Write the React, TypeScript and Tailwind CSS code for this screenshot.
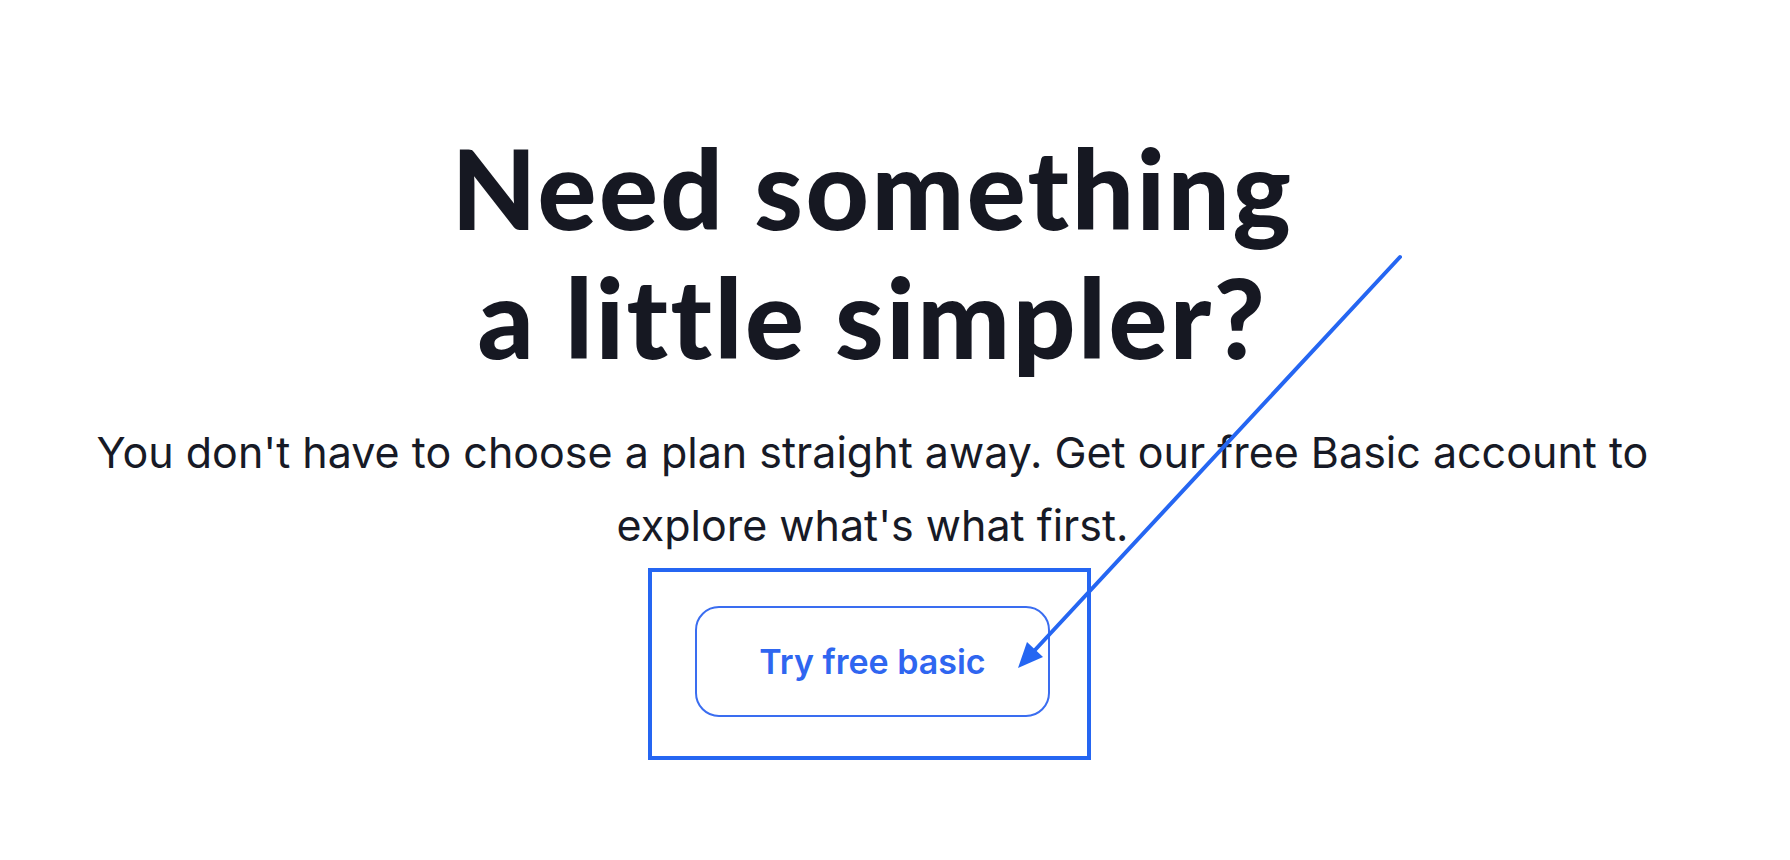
import React from "react";

export default function App() {
  return (
    <div className="relative w-[1790px] h-[860px] bg-white overflow-hidden">
      <div className="flex flex-col items-center w-[1745px] pt-[123px]">
        <h1
          className="text-center text-[110px] leading-[129px] font-black text-[#161822] tracking-[2.5px] whitespace-nowrap"
          style={{ fontFamily: "Lato, 'Noto Sans', sans-serif" }}
        >
          Need something
          <br />
          a little simpler?
        </h1>
        <p
          className="mt-[35px] text-center text-[43px] leading-[73px] text-[#171a26] whitespace-nowrap"
          style={{ fontFamily: "Inter, 'Noto Sans', sans-serif" }}
        >
          You don't have to choose a plan straight away. Get our free Basic account to
          <br />
          explore what's what first.
        </p>
        <button
          className="mt-[44px] w-[355px] h-[111px] rounded-[24px] border-2 border-[#3a6df0] bg-white text-[#2f66f0] text-[34px] font-semibold flex items-center justify-center"
          style={{ fontFamily: "Inter, 'Noto Sans', sans-serif" }}
        >
          Try free basic
        </button>
      </div>
      <svg
        className="absolute left-0 top-0 pointer-events-none"
        width="1790"
        height="860"
        viewBox="0 0 1790 860"
      >
        <rect x="650" y="570" width="439" height="188" fill="none" stroke="#2566f2" strokeWidth="4" />
        <line x1="1400" y1="257" x2="1035" y2="650" stroke="#2566f2" strokeWidth="4" strokeLinecap="round" />
        <polygon points="1018,668 1043,657 1027,642" fill="#2566f2" />
      </svg>
    </div>
  );
}
